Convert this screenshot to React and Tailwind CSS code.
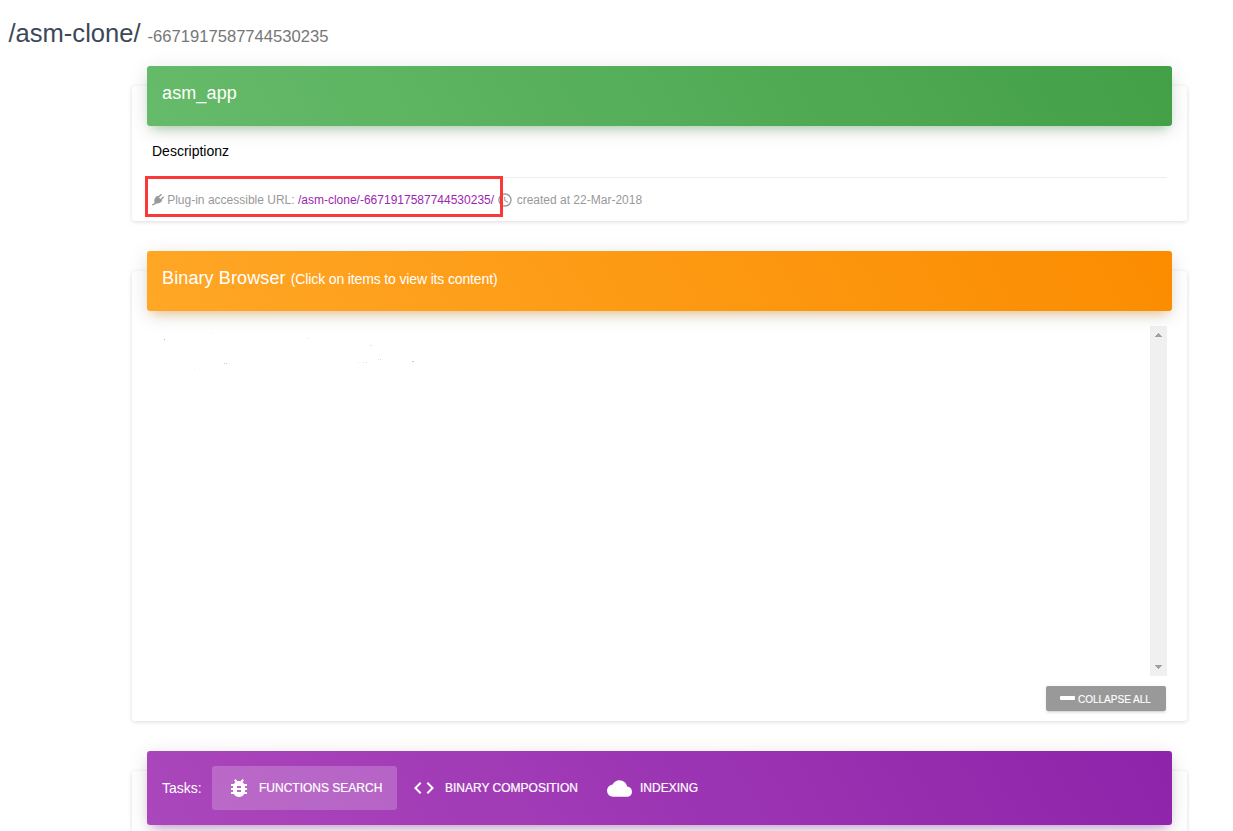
import React from 'react';
import { MdBugReport, MdCode, MdCloud, MdAccessTime } from 'react-icons/md';

const cardClass =
  'relative ml-[132px] w-[1055px] rounded-[3px] bg-white px-[15px] shadow-[0_1px_4px_0_rgba(0,0,0,0.14)]';

function PlugIcon({ className }) {
  return (
    <svg className={className} viewBox="0 0 12 12" fill="currentColor">
      <path d="M5.2 1.8l5 5c-1.3 2-3.6 3.3-5.9 2.6C3.200 10.400 1.900 11.300.3 11.500c-.3-.4-.3-1 0-1.300C1.400 9.900 2.200 9.300 2.700 8.400 1.500 6.200 3.200 3.300 5.200 1.800z" />
      <path d="M6.200 3.300L9 .7M8.700 5.800l2.600-2.500" stroke="currentColor" strokeWidth="1.500" strokeLinecap="round" />
    </svg>
  );
}

function Specks() {
  const specks = [
    [164, 339, 1, '#bbb'], [211, 333, 1, '#eee'], [307, 338, 2, '#eee'], [370, 345, 2, '#e4e4e4'],
    [224, 363, 1, '#ccc'], [226, 363, 1, '#ccc'], [194, 368, 1, '#eee'], [358, 362, 1, '#eee'],
    [363, 362, 1, '#ddd'], [366, 362, 1, '#ddd'], [378, 359, 1, '#ddd'], [380, 359, 1, '#ddd'], [412, 361, 2, '#ccc'],
  ];
  return (
    <svg className="block h-[60px] w-[300px]" viewBox="152 326 300 60" shapeRendering="crispEdges">
      {specks.map(([x, y, w, c]) => (
        <rect key={`${x}-${y}`} x={x} y={y} width={w} height="1" fill={c} />
      ))}
    </svg>
  );
}

function Tab({ icon, label, className }) {
  return (
    <div className={`flex h-11 items-center rounded-[3px] text-[12px] font-medium uppercase text-white [-webkit-text-stroke:0.2px_white] ${className}`}>
      {icon}
      <span className="whitespace-nowrap">{label}</span>
    </div>
  );
}

export default function App() {
  return (
    <div className="h-[831px] w-[1233px] overflow-hidden bg-white font-['Liberation_Sans',Arial,sans-serif] text-[14px] leading-[20px]">
      <h1 className="flex h-[86px] items-baseline gap-[7px] pl-[8.5px] pt-[15px] text-[25.55px] leading-[36px] text-[#3c4858]">
        <span>/asm-clone/</span>
        <small className="text-[16.6px] text-[#777]">-6671917587744530235</small>
      </h1>

      <section className={`${cardClass} h-[135px]`}>
        <header className="relative -top-5 h-[60px] w-[1025px] rounded-[3px] bg-[linear-gradient(60deg,#66bb6a,#43a047)] px-[15px] pt-[15px] text-[18px] leading-[25px] tracking-[0.12px] text-white shadow-[0_4px_20px_0_rgba(0,0,0,0.12),0_7px_10px_-5px_rgba(76,175,80,0.4)]">
          asm_app
        </header>
        <div className="-mt-5 px-[5px]">
          <p className="pt-[15px] text-black">Descriptionz</p>
          <div className="relative mt-[16px] flex h-[44px] items-center border-t border-[#eee] text-[12px] text-[#999]">
            <PlugIcon className="h-[12px] w-[12px]" />
            <span className="ml-[3.2px] whitespace-nowrap">
              Plug-in accessible URL: <a className="text-[#9c27b0]">/asm-clone/-6671917587744530235/</a>
            </span>
            <MdAccessTime className="ml-[3px] h-4 w-4" />
            <span className="ml-[3.6px] whitespace-nowrap">created at 22-Mar-2018</span>
            <div className="absolute -left-[7px] -top-[2px] h-[41px] w-[358px] border-[3px] border-[#fa3838]" />
          </div>
        </div>
      </section>

      <section className={`${cardClass} mt-[50px] h-[450px]`}>
        <header className="relative -top-5 h-[60px] w-[1025px] rounded-[3px] bg-[linear-gradient(60deg,#ffa726,#fb8c00)] px-[15px] pt-[15px] text-[18px] leading-[25px] tracking-[0.12px] text-white shadow-[0_4px_20px_0_rgba(0,0,0,0.12),0_7px_10px_-5px_rgba(255,152,0,0.4)]">
          Binary Browser <small className="text-[14px] tracking-[-0.14px]">(Click on items to view its content)</small>
        </header>
        <div className="-mt-[5px] flex h-[350px] justify-between px-[5px]">
          <Specks />
          <div className="flex w-[17px] flex-col items-center justify-between bg-[#f0f0f0] py-[7px]">
            <svg width="7" height="4" viewBox="0 0 7 4" shapeRendering="crispEdges" fill="#a0a0a0"><path d="M3 0h1v1h1v1h1v1h1v1H0V3h1V2h1V1h1z" /></svg>
            <svg width="7" height="4" viewBox="0 0 7 4" shapeRendering="crispEdges" fill="#a0a0a0"><path d="M0 0h7v1H6v1H5v1H4v1H3V3H2V2H1V1H0z" /></svg>
          </div>
        </div>
        <div className="mt-[10px] flex justify-end pr-[6px]">
          <button className="flex h-[25px] w-[120px] items-center rounded-[2px] bg-[#999] pl-[14px] pt-[2px] text-[10px] text-white shadow-[0_2px_2px_0_rgba(153,153,153,0.14),0_3px_1px_-2px_rgba(153,153,153,0.2),0_1px_5px_0_rgba(153,153,153,0.12)]">
            <span className="-mt-[4px] mr-[3px] h-[4px] w-[15px] rounded-[1px] bg-white" />
            <span className="whitespace-nowrap [-webkit-text-stroke:0.15px_white]">COLLAPSE ALL</span>
          </button>
        </div>
      </section>

      <section className={`${cardClass} mt-[50px] h-[135px]`}>
        <header className="relative -top-5 flex h-[74px] w-[1025px] items-center rounded-[3px] bg-[linear-gradient(60deg,#ab47bc,#8e24aa)] px-[15px] text-white shadow-[0_4px_20px_0_rgba(0,0,0,0.12),0_7px_10px_-5px_rgba(156,39,176,0.4)]">
          <span className="w-[50px]">Tasks:</span>
          <Tab className="w-[185px] bg-white/20 pl-[15px]" icon={<MdBugReport className="mr-[8px] h-6 w-6" />} label="Functions Search" />
          <Tab className="ml-[5px] w-[191px] pl-[10px]" icon={<MdCode className="mr-[9px] h-6 w-6" />} label="Binary Composition" />
          <Tab className="pl-[14px]" icon={<MdCloud className="mr-[8px] h-[25px] w-[25px]" />} label="Indexing" />
        </header>
      </section>
    </div>
  );
}
